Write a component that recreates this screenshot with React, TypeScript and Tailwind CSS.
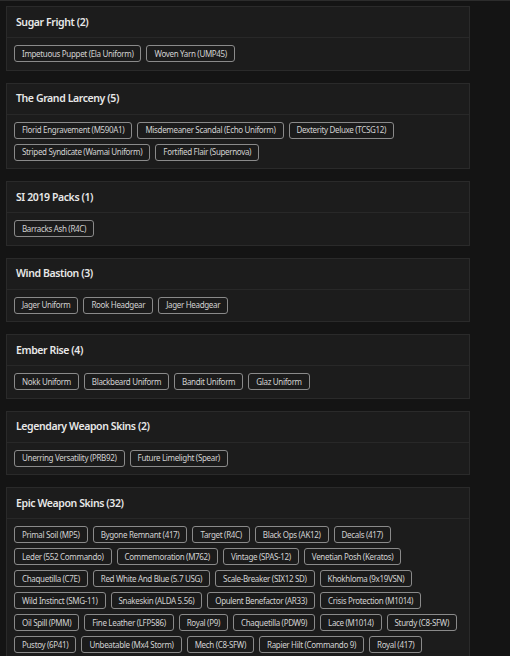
import React from "react";

type Group = { title: string; items: string[] };

const groups: Group[] = [
  { title: "Sugar Fright (2)", items: ["Impetuous Puppet (Ela Uniform)", "Woven Yarn (UMP45)"] },
  {
    title: "The Grand Larceny (5)",
    items: [
      "Florid Engravement (M590A1)",
      "Misdemeaner Scandal (Echo Uniform)",
      "Dexterity Deluxe (TCSG12)",
      "Striped Syndicate (Wamai Uniform)",
      "Fortified Flair (Supernova)",
    ],
  },
  { title: "SI 2019 Packs (1)", items: ["Barracks Ash (R4C)"] },
  { title: "Wind Bastion (3)", items: ["Jager Uniform", "Rook Headgear", "Jager Headgear"] },
  { title: "Ember Rise (4)", items: ["Nokk Uniform", "Blackbeard Uniform", "Bandit Uniform", "Glaz Uniform"] },
  { title: "Legendary Weapon Skins (2)", items: ["Unerring Versatility (PRB92)", "Future Limelight (Spear)"] },
  {
    title: "Epic Weapon Skins (32)",
    items: [
      "Primal Soil (MP5)",
      "Bygone Remnant (417)",
      "Target (R4C)",
      "Black Ops (AK12)",
      "Decals (417)",
      "Leder (552 Commando)",
      "Commemoration (M762)",
      "Vintage (SPAS-12)",
      "Venetian Posh (Keratos)",
      "Chaquetilla (C7E)",
      "Red White And Blue (5.7 USG)",
      "Scale-Breaker (SIX12 SD)",
      "Khokhloma (9x19VSN)",
      "Wild Instinct (SMG-11)",
      "Snakeskin (ALDA 5.56)",
      "Opulent Benefactor (AR33)",
      "Crisis Protection (M1014)",
      "Oil Spill (PMM)",
      "Fine Leather (LFP586)",
      "Royal (P9)",
      "Chaquetilla (PDW9)",
      "Lace (M1014)",
      "Sturdy (C8-SFW)",
      "Pustoy (6P41)",
      "Unbeatable (Mx4 Storm)",
      "Mech (C8-SFW)",
      "Rapier Hilt (Commando 9)",
      "Royal (417)",
      "Gilded (Super 90)",
      "Orchid (AUG A2)",
      "Cobalt (V308)",
      "Ruby (ITA12L)",
    ],
  },
];

function Tag({ label }: { label: string }) {
  return (
    <span className="flex h-[17px] items-center whitespace-nowrap rounded-[3px] border border-[#8a8a8a] bg-[#1b1b1b] px-[7px] text-[8px] leading-none tracking-[-0.33px] text-[#d2d2d2]">
      {label}
    </span>
  );
}

function Card({ group }: { group: Group }) {
  return (
    <section className="w-[464px] border border-[#2a2a2a] bg-[#1c1c1c]">
      <div className="flex h-[31px] items-center border-b border-[#282828] px-[9px]">
        <h2 className="text-[10.5px] font-semibold leading-none tracking-[-0.4px] text-[#e8e8e8]">{group.title}</h2>
      </div>
      <div className="flex flex-wrap gap-[5px] px-[7px] pb-[7.5px] pt-[7px]">
        {group.items.map((it, i) => (
          <Tag key={i} label={it} />
        ))}
      </div>
    </section>
  );
}

export default function App() {
  return (
    <div className="min-h-screen border-t border-[#2c2c2c] bg-[#141414] pl-[6px] pt-[5px] font-['Noto_Sans',sans-serif]">
      <div className="flex flex-col gap-[12px]">
        {groups.map((g, i) => (
          <Card key={i} group={g} />
        ))}
      </div>
    </div>
  );
}
